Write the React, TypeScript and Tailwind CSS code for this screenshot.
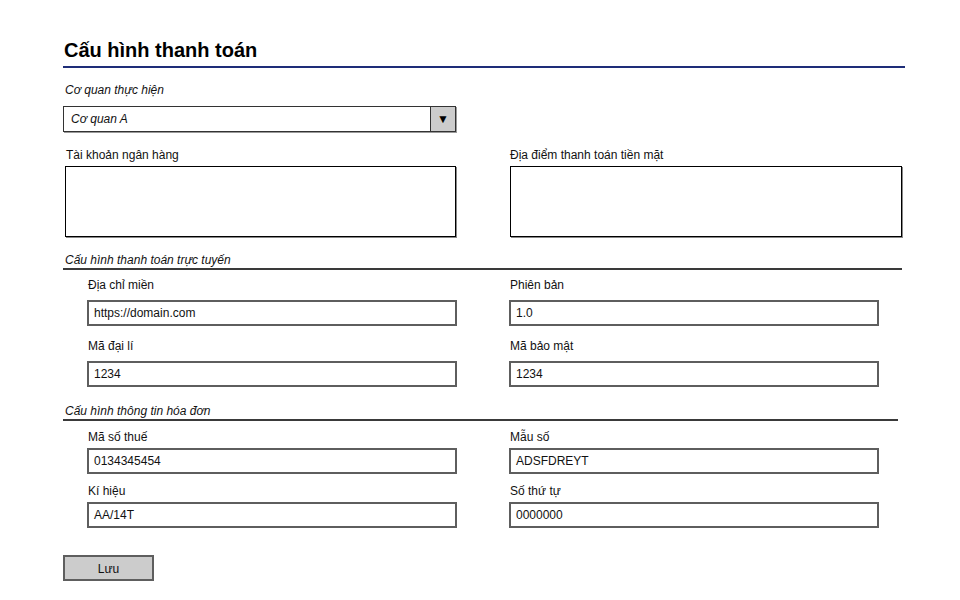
import React from 'react';

const font = { fontFamily: '"Liberation Sans", Arial, sans-serif' };

function Field({ label, value, indent, tight }: { label: string; value: string; indent?: boolean; tight?: boolean }) {
  return (
    <div className={indent ? 'pl-[24px]' : 'pl-0'}>
      <div className="text-[12px] leading-[16px] text-[#111] pl-[1px]">{label}</div>
      <div
        className={`${tight ? 'mt-[3px]' : 'mt-[7px]'} w-[370px] h-[26px] border-2 border-[#5e5e5e] bg-white flex items-center px-[5px] text-[12px] text-[#111]`}
      >
        {value}
      </div>
    </div>
  );
}

function SectionHeading({ title, width }: { title: string; width: string }) {
  return (
    <div className={`${width} h-[18px] border-b-2 border-[#3a3a3a] text-[12px] leading-[16px] text-[#111] italic pl-[2px]`}>
      {title}
    </div>
  );
}

export default function App() {
  return (
    <div className="w-[960px] h-[600px] bg-white" style={font}>
      <div className="ml-[63px] w-[842px] pt-[36px]">
        <h1 className="text-[20px] leading-[28px] font-bold text-black pl-[1px]">Cấu hình thanh toán</h1>
        <div className="mt-[2px] border-b-2 border-[#1e2d78]" />

        <div className="mt-[14px] text-[12px] leading-[16px] italic text-[#111] pl-[2px]">Cơ quan thực hiện</div>
        <div className="mt-[8px] w-[393px] h-[26px] flex border border-[#333] shadow-[1px_1px_0_#999]">
          <div className="flex-1 flex items-center px-[7px] text-[12px] italic text-[#111]">Cơ quan A</div>
          <div className="w-[25px] bg-[#cccccc] border-l border-[#333] flex items-center justify-center text-[12px] text-black">▼</div>
        </div>

        <div className="mt-[15px] grid grid-cols-[394px_393px] gap-x-[53px]">
          <div className="pl-[2px]">
            <div className="text-[12px] leading-[16px] text-[#111] pl-[1px]">Tài khoản ngân hàng</div>
            <div className="mt-[3px] w-[391px] h-[71px] border border-black shadow-[1px_1px_0_#888]" />
          </div>
          <div>
            <div className="text-[12px] leading-[16px] text-[#111]">Địa điểm thanh toán tiền mặt</div>
            <div className="mt-[3px] w-[392px] h-[71px] border border-black shadow-[1px_1px_0_#888]" />
          </div>
        </div>

        <div className="mt-[15px]">
          <SectionHeading title="Cấu hình thanh toán trực tuyến" width="w-[839px]" />
        </div>
        <div className="mt-[7px] grid grid-cols-[394px_370px] gap-x-[52px] gap-y-[12px]">
          <Field indent label="Địa chỉ miền" value="https://domain.com" />
          <Field label="Phiên bản" value="1.0" />
          <Field indent label="Mã đại lí" value="1234" />
          <Field label="Mã bảo mật" value="1234" />
        </div>

        <div className="mt-[16px]">
          <SectionHeading title="Cấu hình thông tin hóa đơn" width="w-[835px]" />
        </div>
        <div className="mt-[8px] grid grid-cols-[394px_370px] gap-x-[52px] gap-y-[9px]">
          <Field indent tight label="Mã số thuế" value="0134345454" />
          <Field tight label="Mẫu số" value="ADSFDREYT" />
          <Field indent tight label="Kí hiệu" value="AA/14T" />
          <Field tight label="Số thứ tự" value="0000000" />
        </div>

        <button className="mt-[27px] w-[91px] h-[26px] bg-[#cccccc] border-2 border-[#5e5e5e] text-[12px] text-[#111] flex items-center justify-center pt-[2px]">
          Lưu
        </button>
      </div>
    </div>
  );
}
